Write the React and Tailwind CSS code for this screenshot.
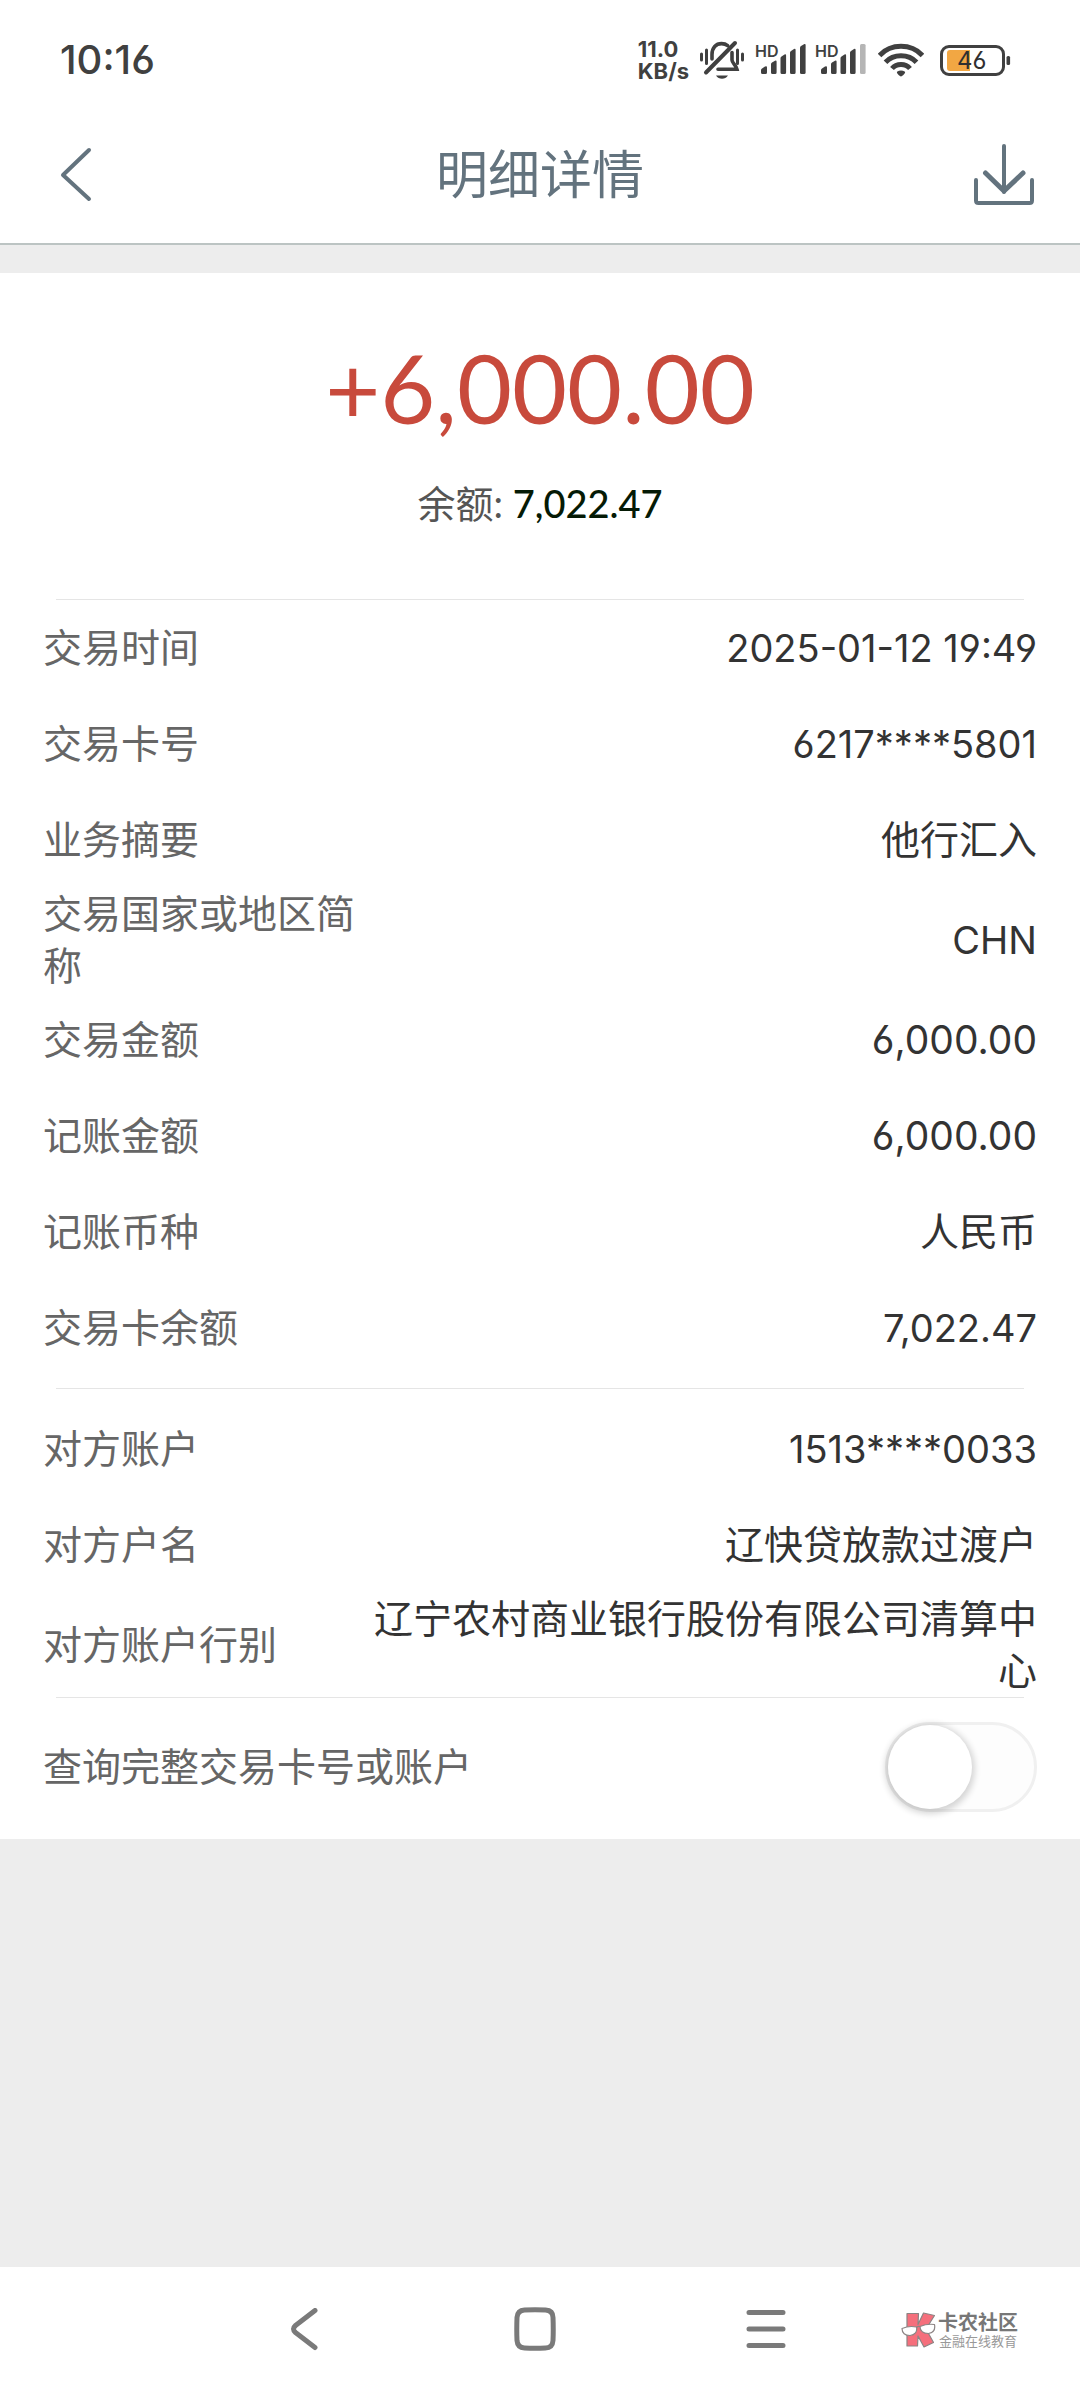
import { useState } from "react";

const transactionRows = [
  { label: "交易时间", value: "2025-01-12 19:49", latin: true },
  { label: "交易卡号", value: "6217****5801", latin: true },
  { label: "业务摘要", value: "他行汇入" },
  { label: "交易国家或地区简称", value: "CHN", latin: true },
  { label: "交易金额", value: "6,000.00" },
  { label: "记账金额", value: "6,000.00" },
  { label: "记账币种", value: "人民币" },
  { label: "交易卡余额", value: "7,022.47", latin: true },
];

const counterpartyRows = [
  { label: "对方账户", value: "1513****0033", latin: true },
  { label: "对方户名", value: "辽快贷放款过渡户" },
  { label: "对方账户行别", value: "辽宁农村商业银行股份有限公司清算中心" },
];

// ================= STATUS BAR =================

function MutedBell() {
  return (
    <svg width="46" height="40" viewBox="0 0 46 40" fill="none" stroke="#404040" strokeWidth="3.6" strokeLinecap="round" aria-hidden="true">
      <path d="M2.500 14v6M7.500 10v13.500M38.500 10v13.500M43.500 14v6" strokeWidth="3" />
      <path d="M13 19v-4.500C13 7.500 17 3.600 22.500 3.600c2.600 0 4.600.7 6.200 2" />
      <path d="M33 12.500v7.500c0 3 4 5 5 9.300H19" />
      <path d="M36 3 7 32.500" strokeWidth="4" />
      <path d="M17 35.500h12c-1.500 2.400-3.600 3.300-6 3.300s-4.600-1-6-3.300Z" fill="#404040" stroke="none" />
    </svg>
  );
}

function Signal({ weak }) {
  return (
    <div className="relative h-9 w-[51px]">
      <span className="absolute top-0 left-0 text-[16px] leading-[18px] font-semibold">HD</span>
      <svg className="absolute right-0 bottom-1" width="46" height="30" viewBox="0 0 46 30" fill="#404040" aria-hidden="true">
        <path d="M1 26q0-1 1-1.500l3-2q2-1 2 1v5q0 1.500-1.500 1.500h-3Q1 30 1 28.500Z" />
        <path d="M11 20q0-1 1-1.500l3-1.800q1.600-.8 1.600 1V28.500q0 1.500-1.500 1.500h-2.600q-1.500 0-1.500-1.500Z" />
        <path d="M20.500 14q0-1 1-1.600l3-2q1.600-.8 1.600 1V28.500q0 1.500-1.500 1.500H22q-1.500 0-1.500-1.500Z" />
        <path d="M30 8.500q0-1 1-1.600l3-2q1.600-.8 1.600 1V28.500q0 1.500-1.500 1.500h-2.600Q30 30 30 28.500Z" />
        <path
          d={weak ? "M40 1.500Q40 0 41.500 0h2.600q1.500 0 1.500 1.500v27q0 1.500-1.500 1.500h-2.600Q40 30 40 28.500Z" : "M40 3.500q0-1 1-1.600l3-1.700q1.600-.8 1.600 1v27.300q0 1.500-1.500 1.500h-2.600Q40 30 40 28.500Z"}
          fill={weak ? "#b5b5b5" : "#404040"}
        />
      </svg>
    </div>
  );
}

function Wifi() {
  return (
    <svg width="46" height="34" viewBox="0 0 46 34" fill="none" stroke="#404040" strokeWidth="5" aria-hidden="true">
      <path d="M1.500 12.500C13 .3 33 .3 44.500 12.500" />
      <path d="M7.500 19.200c8-8.600 23-8.600 31 0" />
      <path d="M14 25.500c4.500-5.300 13.500-5.300 18 0" />
      <path d="M19 28.800q4-2.600 8 0c.8 1-2.600 4.600-4 4.600s-4.800-3.600-4-4.600Z" fill="#404040" stroke="none" />
    </svg>
  );
}

function Battery() {
  return (
    <div className="relative">
      <svg width="71" height="31" viewBox="0 0 71 31" fill="none" aria-hidden="true">
        <rect x="1.500" y="1.500" width="62" height="28" rx="7.500" stroke="#404040" strokeWidth="3" />
        <path d="M10 5h20v21H10q-3 0-3-3V8q0-3 3-3Z" fill="#f2a743" />
        <rect x="66.500" y="11" width="3.600" height="9" rx="1.500" fill="#404040" />
      </svg>
      <span className="absolute top-0 left-[17px] text-[24px] leading-[31px] text-[#303030]">46</span>
    </div>
  );
}

function StatusBar() {
  return (
    <div className="flex h-[120px] items-center justify-between pr-[69px] pl-[60px] text-[#404040]">
      <span className="text-[40px] leading-none font-medium">10:16</span>
      <div className="flex items-center">
        <div className="mr-[10px] text-[22px] leading-[22px] font-bold">
          <div>11.0</div>
          <div>KB/s</div>
        </div>
        <MutedBell />
        <div className="mr-[9px] ml-[10px]">
          <Signal />
        </div>
        <div className="mr-3">
          <Signal weak />
        </div>
        <Wifi />
        <div className="ml-4">
          <Battery />
        </div>
      </div>
    </div>
  );
}

// ================= HEADER =================

function Header() {
  return (
    <header className="flex h-[125px] items-start justify-between border-b-2 border-[#bcc4c3] px-[46px] text-[#63737e]">
      <button type="button" aria-label="返回" className="flex h-[108px] w-[62px] items-center pl-3">
        <svg width="34" height="56" viewBox="0 0 34 56" fill="none" stroke="currentColor" strokeWidth="4" strokeLinecap="round" strokeLinejoin="round">
          <path d="M31 4 5 29l26 24" />
        </svg>
      </button>
      <h1 className="text-[52px] leading-[112px]">明细详情</h1>
      <button type="button" aria-label="下载" className="flex h-[108px] w-[62px] items-center">
        <svg width="62" height="62" viewBox="0 0 62 62" fill="none" stroke="currentColor" strokeWidth="4" strokeLinecap="round" strokeLinejoin="round">
          <path d="M32 3v46" />
          <path d="M13.500 30 32 48l19-18" strokeWidth="5" />
          <path d="M4 37v20.500q0 2.500 2.500 2.500h51q2.500 0 2.500-2.500V37" />
        </svg>
      </button>
    </header>
  );
}

// ================= DETAILS =================

function DetailList({ rows }) {
  return (
    <dl className="px-[43px]">
      {rows.map((row) => (
        <div key={row.label} className="flex min-h-24 items-center justify-between text-[39px] leading-[52px]">
          <dt className="max-w-[340px] text-[#666]">{row.label}</dt>
          <dd className={`max-w-[68%] text-right text-[#333] ${row.latin ? "text-[38px]" : ""}`}>{row.value}</dd>
        </div>
      ))}
    </dl>
  );
}

function FullNumberSwitch() {
  const [checked, setChecked] = useState(false);

  return (
    <div className="flex h-[141px] items-center justify-between px-[43px] pb-1">
      <label htmlFor="full-number" className="text-[39px] leading-[52px] text-[#666]">
        查询完整交易卡号或账户
      </label>
      <input
        id="full-number"
        type="checkbox"
        role="switch"
        checked={checked}
        onChange={(e) => setChecked(e.target.checked)}
        className="h-[90px] w-[152px] cursor-pointer appearance-none rounded-full border-3 border-[#f0f0f0] bg-[#fdfdfd] before:block before:size-[84px] before:rounded-full before:bg-white before:shadow-[0_2px_6px_3px_rgba(0,0,0,0.16)] before:content-[''] checked:bg-[#4cd964] checked:before:ml-[62px]"
      />
    </div>
  );
}

// ================= BOTTOM NAVIGATION =================

function CommunityMark() {
  return (
    <div className="flex items-center gap-[2px]">
      <svg width="35" height="36" viewBox="0 0 35 36" stroke="#8c8484" strokeWidth="1.200" strokeLinejoin="round" aria-hidden="true">
        <path d="M6 1.500h11.500l-.5 11L22.500 1l11 2.500L25 17l7.500 13.500-9.500 4.500-6-11-.5 10H6Z" fill="#f56f7c" />
        <path d="M1 16.500q7-3 14.500-1.500c1 5-1.500 8-6.500 8.500-5 0-8-2.500-8-7ZM19 14.500q7-3 14.500-2c1 5-1 8-6 9-5 0-8.500-2.500-8.500-7Z" fill="#fff" />
        <path d="M15.500 15.500q1.500-1.500 3.500-1" fill="none" />
      </svg>
      <div className="text-center">
        <div className="text-[20px] leading-[22px] font-bold text-[#777]">卡农社区</div>
        <div className="text-[13px] leading-[14px] text-[#999]">金融在线教育</div>
      </div>
    </div>
  );
}

function BottomNav() {
  return (
    <nav className="grid h-[133px] grid-cols-[1fr_231px_231px_231px_1fr] items-center bg-white pr-[10px] pb-[8px] text-[#7a7a7a]">
      <button type="button" aria-label="返回" className="col-start-2 justify-self-center">
        <svg width="28" height="44" viewBox="0 0 28 44" fill="none" stroke="currentColor" strokeWidth="5" strokeLinecap="round" strokeLinejoin="round">
          <path d="M25 2.500 5.500 17.500q-4 3.500 0 7L25 39.500" />
        </svg>
      </button>
      <button type="button" aria-label="主页" className="justify-self-center">
        <svg width="42" height="46" viewBox="0 0 42 46" fill="none" stroke="currentColor" strokeWidth="5">
          <path d="M10.500 3Q21 2.600 31.500 3 39 3.500 39 10.500q.5 12 0 23Q38.500 41 31.500 41q-10.500.6-21 0Q3.500 40.500 3 33.500q-.5-11 0-23Q3.500 3.500 10.500 3Z" />
        </svg>
      </button>
      <button type="button" aria-label="最近任务" className="justify-self-center">
        <svg width="40" height="40" viewBox="0 0 40 40" stroke="currentColor" strokeWidth="5" strokeLinecap="round">
          <path d="M3 2.500h34M3 19h34M3 35.500h34" />
        </svg>
      </button>
      <div className="justify-self-end pr-[52px]">
        <CommunityMark />
      </div>
    </nav>
  );
}

export default function App() {
  return (
    <div
      lang="zh-CN"
      className="flex min-h-screen flex-col bg-[#ededed] font-[Inter,'Noto_Sans_CJK_SC',sans-serif] [font-feature-settings:'cv03','cv04']"
    >
      <div className="bg-white">
        <StatusBar />
        <Header />
      </div>

      <main className="mt-7 bg-white">
        <section className="flex h-[326px] flex-col items-center pt-[60px]">
          <p className="font-[Lato,sans-serif] text-[95px] leading-[108px] text-[#c84a3c]">+6,000.00</p>
          <p className="mt-9 font-[Lato,'Noto_Sans_CJK_SC',sans-serif] text-[38px] leading-[52px] text-[#555]">
            余额: <span className="font-medium text-[#051a05]">7,022.47</span>
          </p>
        </section>
        <hr className="mx-14 border-[#e5e5e5]" />
        <DetailList rows={transactionRows} />
        <hr className="mx-14 my-3 border-[#e5e5e5]" />
        <DetailList rows={counterpartyRows} />
        <hr className="mx-14 border-[#e5e5e5]" />
        <FullNumberSwitch />
      </main>

      <div className="mt-auto">
        <BottomNav />
      </div>
    </div>
  );
}
